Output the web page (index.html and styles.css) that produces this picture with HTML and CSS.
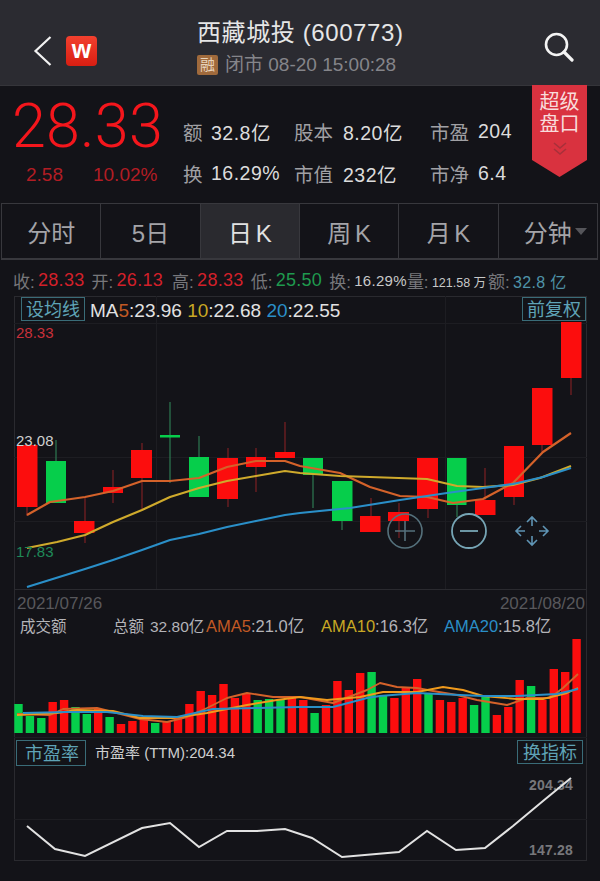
FILE: index.html
```html
<!DOCTYPE html>
<html lang="zh-CN">
<head>
<meta charset="utf-8">
<title>西藏城投 (600773)</title>
<link rel="stylesheet" href="styles.css">
</head>
<body>
<div class="page">
  <header class="topbar">
    <svg class="back" width="20" height="32" viewBox="0 0 20 32"><path d="M17.5 2 L2.5 16 L17.5 30" fill="none" stroke="#f2f2f2" stroke-width="2.2"/></svg>
    <div class="logo">w</div>
    <div class="title-block">
      <div class="title">西藏城投 (600773)</div>
      <div class="subtitle"><span class="rong">融</span><span>闭市 08-20 15:00:28</span></div>
    </div>
    <svg class="search" width="30" height="30" viewBox="0 0 30 30"><circle cx="12.5" cy="12.5" r="10.5" fill="none" stroke="#f4f4f4" stroke-width="2.6"/><path d="M20 20 L28 28" stroke="#f4f4f4" stroke-width="3.2" stroke-linecap="round"/></svg>
  </header>

  <section class="quote">
    <div class="price-block">
      <div class="price">28.33</div>
      <div class="change"><span>2.58</span><span>10.02%</span></div>
    </div>
    <div class="stats">
      <div class="stat s1"><span class="k">额</span><span class="v">32.8亿</span></div>
      <div class="stat s2"><span class="k">股本</span><span class="v">8.20亿</span></div>
      <div class="stat s3"><span class="k">市盈</span><span class="v">204</span></div>
      <div class="stat s1"><span class="k">换</span><span class="v">16.29%</span></div>
      <div class="stat s2"><span class="k">市值</span><span class="v">232亿</span></div>
      <div class="stat s3"><span class="k">市净</span><span class="v">6.4</span></div>
    </div>
    <div class="super">
      <div class="super-text">超级<br>盘口</div>
      <svg width="16" height="16" viewBox="0 0 16 16"><path d="M2 2 L8 7 L14 2 M2 8 L8 13 L14 8" fill="none" stroke="#a8303a" stroke-width="1.6"/></svg>
    </div>
  </section>

  <nav class="tabs">
    <div class="tab">分时</div>
    <div class="tab">5日</div>
    <div class="tab active">日 K</div>
    <div class="tab">周 K</div>
    <div class="tab">月 K</div>
    <div class="tab">分钟<i class="caret"></i></div>
  </nav>

  <div class="info">
    <span class="l">收:</span><span class="r">28.33</span>
    <span class="l g1">开:</span><span class="r">26.13</span>
    <span class="l g2">高:</span><span class="r">28.33</span>
    <span class="l g1">低:</span><span class="gn">25.50</span>
    <span class="l g1">换:</span><span class="w">16.29%</span>
    <span class="l g3">量:</span><span class="w sm">121.58 万</span>
    <span class="l g4">额:</span><span class="b">32.8 亿</span>
  </div>

  <svg class="chart" width="600" height="591" viewBox="0 290 600 591">
    <g class="grid">
      <path d="M14.5 296 V860.5 M586.5 296 V860.5 M14 296.5 H587 M14 589.5 H587 M14 860.5 H587"/>
    </g>
    <g class="grid-dim">
      <path d="M14 323.5 H587 M14 457.5 H587 M14 521.5 H587 M156.5 296 V589 M445.5 296 V589 M14 737.5 H587 M14 819.5 H587"/>
    </g>

    <g class="wick-r">
      <path d="M27 507V516M85 498V543M113 470V503M142 443V510M228 448V507M256 448V492M285 422V458M371 498V516M399 503V538M428 509V518M485 468V500M514 497V505M542 445V452M571 378V395"/>
    </g>
    <g class="wick-g">
      <path d="M56 440V461M170 402V483M199 436V457M313 475V508M342 521V530M457 505V517"/>
    </g>
    <g class="up">
      <rect x="17" y="445" width="20.5" height="62"/>
      <rect x="74" y="521" width="20.5" height="12"/>
      <rect x="103" y="487" width="20" height="6"/>
      <rect x="131" y="450" width="21" height="28"/>
      <rect x="217" y="458" width="21" height="41"/>
      <rect x="246" y="457" width="20" height="10"/>
      <rect x="275" y="452" width="20" height="6"/>
      <rect x="360" y="516" width="20.5" height="16"/>
      <rect x="388" y="512" width="21" height="9"/>
      <rect x="417" y="458" width="21" height="51"/>
      <rect x="475" y="500" width="20.5" height="15"/>
      <rect x="504" y="446" width="20" height="51"/>
      <rect x="532" y="388" width="20.5" height="57"/>
      <rect x="561" y="322" width="20.5" height="56"/>
    </g>
    <g class="down">
      <rect x="46" y="461" width="20" height="42"/>
      <rect x="160" y="435" width="20" height="2.5"/>
      <rect x="189" y="457" width="20" height="40"/>
      <rect x="303" y="458" width="20" height="17"/>
      <rect x="332" y="481" width="20.5" height="40"/>
      <rect x="447" y="458" width="19.5" height="47"/>
    </g>

    <polyline class="ln ma5" points="27,515 50,502 85,497 113,491 142,481 170,481 199,478 227,467 256,461 285,461 300,466 340,473 370,487 400,496 427,497 453,503 483,499 513,483 543,452 571,433"/>
    <polyline class="ln ma10" points="27,548 57,542 85,535 113,522 142,510 170,497 199,488 227,481 256,476 285,471 300,473 340,476 370,477 427,479 457,486 483,487 513,485 540,478 571,466"/>
    <polyline class="ln ma20" points="27,587 85,569 113,560 142,550 170,540 199,534 227,527 256,521 285,515 300,513 350,508 400,500 447,493 483,488 513,484 543,477 571,468"/>

    <rect class="btn" x="21.5" y="297.5" width="63" height="23"/>
    <text class="t18 teal" x="26" y="316">设均线</text>
    <text class="t19 white" x="90" y="317">MA<tspan class="c5">5</tspan>:23.96 <tspan class="c10">10</tspan>:22.68 <tspan class="c20">20</tspan>:22.55</text>
    <rect class="btn" x="522.5" y="297.5" width="63" height="23"/>
    <text class="t18 teal" x="527" y="316">前复权</text>

    <text class="t15 red-t" x="16" y="338">28.33</text>
    <text class="t15 light" x="16" y="446">23.08</text>
    <text class="t15 green-t" x="16" y="557">17.83</text>

    <g class="zoom-ctl">
      <circle class="c-dim" cx="405" cy="531" r="17"/>
      <path class="c-dim" d="M405 521 V541 M395 531 H415"/>
      <circle class="c-bright" cx="469" cy="531" r="17"/>
      <path class="c-bright" d="M460 531 H478"/>
      <path class="c-arrows" d="M532 518 V526 M532 536 V544 M517 531 H525 M539 531 H547 M527 522 L532 517 L537 522 M527 540 L532 545 L537 540 M521 526 L516 531 L521 536 M543 526 L548 531 L543 536"/>
    </g>

    <text class="t17 date" x="17" y="609">2021/07/26</text>
    <text class="t17 date" x="585" y="609" text-anchor="end">2021/08/20</text>

    <text class="t155 soft" x="20" y="632">成交额</text>
    <text class="t155 soft" x="113" y="632">总额</text>
    <text class="t155 soft" x="150" y="632">32.80亿</text>
    <text class="t165 soft" x="206" y="632"><tspan class="c5">AMA5</tspan>:21.0亿</text>
    <text class="t165 soft" x="321" y="632"><tspan class="c10">AMA10</tspan>:16.3亿</text>
    <text class="t165 soft" x="444" y="632"><tspan class="c20">AMA20</tspan>:15.8亿</text>

    <g class="up">
      <rect x="48.5" y="702" width="8.4" height="31"/><rect x="59.9" y="700" width="8.4" height="33"/>
      <rect x="94" y="709" width="8.4" height="24"/><rect x="116.8" y="724" width="8.4" height="9"/>
      <rect x="128.2" y="721" width="8.4" height="12"/><rect x="139.6" y="719" width="8.4" height="14"/>
      <rect x="162.4" y="721" width="8.4" height="12"/><rect x="173.8" y="718" width="8.4" height="15"/>
      <rect x="185.2" y="704" width="8.4" height="29"/><rect x="196.5" y="691" width="8.4" height="42"/>
      <rect x="207.9" y="695" width="8.4" height="38"/><rect x="219.3" y="684" width="8.4" height="49"/>
      <rect x="230.7" y="698" width="8.4" height="35"/><rect x="242.1" y="694" width="8.4" height="39"/>
      <rect x="287.7" y="697" width="8.4" height="36"/><rect x="299.1" y="700" width="8.4" height="33"/>
      <rect x="321.8" y="705" width="8.4" height="28"/><rect x="333.2" y="681" width="8.4" height="52"/>
      <rect x="344.6" y="690" width="8.4" height="43"/><rect x="356" y="673" width="8.4" height="60"/>
      <rect x="390.2" y="698" width="8.4" height="35"/><rect x="401.6" y="688" width="8.4" height="45"/>
      <rect x="413" y="679" width="8.4" height="54"/><rect x="435.7" y="700" width="8.4" height="33"/>
      <rect x="447.1" y="702" width="8.4" height="31"/><rect x="458.5" y="698" width="8.4" height="35"/>
      <rect x="492.7" y="715" width="8.4" height="18"/><rect x="504.1" y="707" width="8.4" height="26"/>
      <rect x="515.5" y="680" width="8.4" height="53"/><rect x="538.2" y="700" width="8.4" height="33"/>
      <rect x="549.6" y="669" width="8.4" height="64"/><rect x="561" y="672" width="8.4" height="61"/>
      <rect x="572.4" y="639" width="8.4" height="94"/>
    </g>
    <g class="down">
      <rect x="14.3" y="704" width="8.4" height="29"/><rect x="25.7" y="716" width="8.4" height="17"/>
      <rect x="37.1" y="718" width="8.4" height="15"/><rect x="71.3" y="707" width="8.4" height="26"/>
      <rect x="82.6" y="714" width="8.4" height="19"/><rect x="105.4" y="717" width="8.4" height="16"/>
      <rect x="151" y="723" width="8.4" height="10"/><rect x="253.5" y="700" width="8.4" height="33"/>
      <rect x="264.9" y="699" width="8.4" height="34"/><rect x="276.3" y="700" width="8.4" height="33"/>
      <rect x="310.4" y="713" width="8.4" height="20"/><rect x="367.4" y="672" width="8.4" height="61"/>
      <rect x="378.8" y="696" width="8.4" height="37"/><rect x="424.3" y="693" width="8.4" height="40"/>
      <rect x="469.9" y="705" width="8.4" height="28"/><rect x="481.3" y="697" width="8.4" height="36"/>
      <rect x="526.9" y="686" width="8.4" height="47"/>
    </g>

    <polyline class="ln-v ma5" points="17,714 50,715 63,709 97,708 113,712 140,719 167,722 187,717 207,708 227,698 247,693 273,697 300,697 333,703 367,690 380,683 397,687 417,688 433,691 457,695 477,700 507,705 527,698 550,698 563,688 578,674"/>
    <polyline class="ln-v amber" points="17,715 57,713 77,710 113,711 140,718 173,718 207,713 247,705 277,700 300,697 327,700 360,697 383,692 417,692 443,687 463,690 483,696 517,699 543,699 567,693 578,688"/>
    <polyline class="ln-v ma20" points="23,713 67,712 107,712 143,716 177,717 213,709 257,708 300,707 333,707 367,698 380,696 417,693 460,695 483,696 517,696 557,694 578,689"/>

    <rect class="btn" x="16.5" y="740.5" width="69" height="25"/>
    <text class="t18 teal" x="25" y="760">市盈率</text>
    <text class="t15 light" x="95" y="758">市盈率 (TTM):204.34</text>
    <rect class="btn" x="517.5" y="740.5" width="65" height="23"/>
    <text class="t18 teal" x="523" y="759">换指标</text>

    <text class="t14 axis" x="529" y="790">204.34</text>
    <text class="t14 axis" x="529" y="855">147.28</text>
    <polyline class="ln-pe" points="27,826 55,849 85,856 142,828 170,823 199,847 227,831 257,831 285,829 312,838 342,857 399,852 427,831 456,850 485,848 513,826 543,801 571,778"/>
  </svg>
</div>
</body>
</html>
```
FILE: styles.css
```css
* { box-sizing: border-box; }
html, body { margin: 0; padding: 0; background: #131318; }
body { font-family: "Liberation Sans", "Noto Sans CJK SC", sans-serif; overflow: hidden; }
.page { position: relative; width: 600px; height: 881px; overflow: hidden; }

.topbar { height: 86px; background: #2b2b31; display: flex; align-items: flex-start; padding-left: 33px; border-bottom: 1px solid #35353a; }
.back { margin-top: 35px; flex: none; }
.logo { margin: 36px 0 0 13px; width: 31px; height: 30px; border-radius: 4px; background: linear-gradient(#f2402e, #d81e12); color: #fff; font-size: 25px; font-weight: 700; line-height: 26px; text-align: center; flex: none; }
.title-block { margin: 18px 0 0 100px; width: 347px; flex: none; }
.title { font-size: 24px; line-height: 30px; color: #e6e6e6; letter-spacing: .6px; }
.subtitle { margin-top: 6px; display: flex; align-items: center; gap: 7px; color: #85858a; font-size: 19px; line-height: 21px; }
.rong { width: 21px; height: 20px; background: #a06a3c; color: #e8d4bc; font-size: 15px; line-height: 20px; text-align: center; border-radius: 2px; }
.search { margin: 32px 0 0 0; flex: none; }

.quote { height: 117px; display: flex; padding-left: 12px; position: relative; }
.price-block { width: 171px; }
.price { font-family: Roboto, "Liberation Sans", sans-serif; font-weight: 300; font-size: 61px; line-height: 70px; margin-top: 5px; color: #f4161c; letter-spacing: .2px; }
.change { display: flex; margin: 2px 0 0 14px; gap: 30px; font-size: 19px; line-height: 24px; color: #b21d24; }
.stats { display: grid; grid-template-columns: 111px 136px 100px; grid-auto-rows: 42px; margin-top: 24px; height: 84px; }
.stat { display: flex; align-items: center; font-size: 19.5px; color: #dcdcdc; }
.v { letter-spacing: .5px; }
.k { color: #a0a0a4; }
.s1 .k { width: 28px; }
.s2 .k { width: 49px; }
.s3 .k { width: 48px; }
.super { position: absolute; left: 532px; top: -1px; width: 55px; height: 92px; background: #d9323f; clip-path: polygon(0 0, 100% 0, 100% 75px, 50% 100%, 0 75px); text-align: center; color: #f8dcdc; }
.super-text { font-size: 20px; line-height: 22px; padding-top: 6px; }
.super svg { margin-top: 6px; display: block; margin-left: auto; margin-right: auto; }

.tabs { display: flex; height: 57px; width: 597px; margin-left: 1px; border: 1px solid #38383d; border-width: 1px 1px 2px 1px; }
.tab { flex: 1; position: relative; display: flex; align-items: center; justify-content: center; font-size: 24px; word-spacing: -3px; color: #a4a4a8; border-left: 1px solid #38383d; }
.tab:first-child { border-left: 0; }
.active { background: #2a2a2f; color: #e2e2e2; }
.caret { position: absolute; right: 10px; top: 24px; width: 0; height: 0; border: 6px solid transparent; border-top: 7px solid #55555a; border-bottom: 0; }

.info { height: 30px; display: flex; align-items: center; padding: 11px 0 0 13px; font-size: 18px; letter-spacing: .3px; white-space: nowrap; }
.l { color: #77777b; width: 25px; font-size: 17px; letter-spacing: 0; }
.g1 { margin-left: 7px; }
.g2 { margin-left: 9px; }
.g3 { margin-left: 0; }
.g4 { margin-left: 2px; }
.r { color: #d2202a; }
.gn { color: #1f9a4e; }
.w { color: #c8c8c8; font-size: 15px; }
.b { color: #4f93a8; font-size: 16px; }
.sm { font-size: 12.5px; letter-spacing: 0; padding-top: 2px; }

.chart { display: block; }
.grid path { fill: none; stroke: #2a2a2f; stroke-width: 1; }
.grid-dim path { fill: none; stroke: #1d1d22; stroke-width: 1; }
.wick-r path { stroke: #7c2024; stroke-width: 1.2; fill: none; }
.wick-g path { stroke: #2e7a52; stroke-width: 1.2; fill: none; }
.up { fill: #fc0d0d; }
.down { fill: #06ce4b; }
.ln { fill: none; stroke-width: 2.2; stroke-linejoin: round; }
.ln-v { fill: none; stroke-width: 1.9; stroke-linejoin: round; }
.ln-pe { fill: none; stroke: #e2e2e2; stroke-width: 2; }
.ma5 { stroke: #d4622a; }
.ma10 { stroke: #cfaa2c; }
.ma20 { stroke: #2a8fc8; }
.amber { stroke: #f09a1c; }
.btn { fill: none; stroke: #3a6c78; stroke-width: 1; }
.t19 { font-size: 19px; }
.t18 { font-size: 18px; }
.t17 { font-size: 17px; }
.t165 { font-size: 16.5px; }
.t155 { font-size: 15.5px; }
.t15 { font-size: 15px; }
.t14 { font-size: 14px; }
.teal { fill: #5fa3b6; }
.white { fill: #e2e2e2; }
.c5 { fill: #c25a24; }
.c10 { fill: #c8a824; }
.c20 { fill: #2a8fc8; }
.red-t { fill: #c8303a; }
.green-t { fill: #1f8a58; }
.light { fill: #cfcfcf; }
.axis { fill: #77777b; font-weight: 700; letter-spacing: .2px; }
.date { fill: #58585c; }
.soft { fill: #b4b4b8; }
.c-dim { fill: none; stroke: #55717c; stroke-width: 1.6; }
.c-bright { fill: none; stroke: #76a5b5; stroke-width: 1.8; }
.c-arrows { fill: none; stroke: #5f94b4; stroke-width: 1.6; }
```
